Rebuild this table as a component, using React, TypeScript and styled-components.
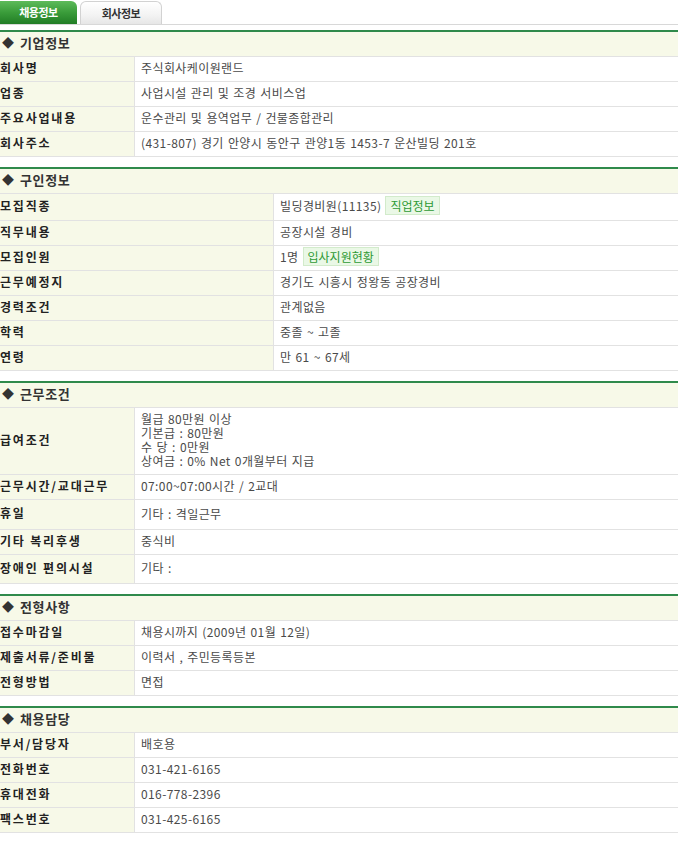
import React from "react";
import styled, { createGlobalStyle } from "styled-components";

const Global = createGlobalStyle`
  html, body { margin: 0; padding: 0; background: #fff; }
  body { font-family: "Noto Sans CJK KR", "Noto Sans", sans-serif; font-size: 12px; color: #444; }
  #root { width: 678px; }
`;

const Page = styled.div`
  width: 678px;
  display: flex;
  flex-direction: column;
`;

const TabBar = styled.div`
  display: flex;
  align-items: flex-end;
  gap: 3px;
  height: 24px;
  border-bottom: 1px solid #d8d8d8;
`;

const Tab = styled.div<{ $active?: boolean }>`
  width: ${(p) => (p.$active ? "77px" : "82px")};
  height: 23px;
  box-sizing: border-box;
  display: flex;
  align-items: center;
  justify-content: center;
  padding-bottom: 1px;
  font-size: 11px;
  font-weight: 700;
  letter-spacing: -0.5px;
  border-radius: ${(p) => (p.$active ? "0 6px 0 0" : "6px 6px 0 0")};
  color: ${(p) => (p.$active ? "#fff" : "#333")};
  background: ${(p) =>
    p.$active
      ? "linear-gradient(to bottom, #5dbb5a 0%, #3a9c3a 50%, #217d25 100%)"
      : "linear-gradient(to bottom, #ffffff 0%, #f3f3f3 60%, #e6e6e6 100%)"};
  border: ${(p) => (p.$active ? "none" : "1px solid #d2d2d2")};
  border-bottom: none;
`;

const Content = styled.div`
  padding-top: 5px;
  display: flex;
  flex-direction: column;
  gap: 10px;
`;

const Section = styled.section`
  border-top: 2px solid #2f8a4b;
  display: flex;
  flex-direction: column;
`;

const SectionHead = styled.div`
  height: 25px;
  box-sizing: border-box;
  padding: 0 0 3px 2px;
  background: #f7f9e8;
  border-bottom: 1px solid #e2e2e2;
  display: flex;
  align-items: center;
  gap: 6px;
  font-size: 13px;
  font-weight: 700;
  color: #333;
  letter-spacing: 0.6px;
`;

const Diamond = styled.span`
  font-size: 12px;
  color: #333;
  letter-spacing: 0;
`;

const Row = styled.div<{ $label: number; $h?: number }>`
  display: grid;
  grid-template-columns: ${(p) => p.$label}px 1fr;
  box-sizing: border-box;
  min-height: ${(p) => (p.$h ?? 24) + 1}px;
  border-bottom: 1px solid #e2e2e2;
`;

const Label = styled.div`
  background: #f7f9e8;
  border-right: 1px solid #e2e2e2;
  display: flex;
  align-items: center;
  padding-bottom: 4px;
  box-sizing: border-box;
  font-weight: 700;
  font-size: 12px;
  color: #222;
  letter-spacing: 1.8px;
  white-space: nowrap;
`;

const Value = styled.div`
  display: flex;
  align-items: center;
  padding: 0 0 3px 6px;
  box-sizing: border-box;
  color: #4a4a4a;
  font-size: 12px;
  letter-spacing: 0.4px;
  word-spacing: 1px;
  white-space: nowrap;
`;

const Lines = styled.div`
  display: flex;
  flex-direction: column;
  justify-content: center;
  padding: 0 0 3px 6px;
  line-height: 14px;
  color: #4a4a4a;
  font-size: 12px;
  letter-spacing: 0.4px;
  word-spacing: 1px;
  white-space: nowrap;
`;

const Badge = styled.span`
  display: inline-block;
  margin-left: 4px;
  padding: 0 4px;
  line-height: 17px;
  background: #eaf8e6;
  border: 1px solid #d2ebcb;
  color: #2e9a35;
  font-size: 12px;
  letter-spacing: 0;
`;

type Item = { k: string; v: React.ReactNode; h?: number; multi?: boolean };

const Block: React.FC<{ title: string; label: number; items: Item[] }> = ({ title, label, items }) => (
  <Section>
    <SectionHead>
      <Diamond>◆</Diamond>
      {title}
    </SectionHead>
    {items.map((it) => (
      <Row key={it.k} $label={label} $h={it.h}>
        <Label>{it.k}</Label>
        {it.multi ? <Lines>{it.v}</Lines> : <Value>{it.v}</Value>}
      </Row>
    ))}
  </Section>
);

export default function App() {
  return (
    <Page>
      <Global />
      <TabBar>
        <Tab $active>채용정보</Tab>
        <Tab>회사정보</Tab>
      </TabBar>
      <Content>
        <Block
          title="기업정보"
          label={135}
          items={[
            { k: "회사명", v: "주식회사케이원랜드" },
            { k: "업종", v: "사업시설 관리 및 조경 서비스업" },
            { k: "주요사업내용", v: "운수관리 및 용역업무 / 건물종합관리" },
            { k: "회사주소", v: "(431-807) 경기 안양시 동안구 관양1동 1453-7 운산빌딩 201호" },
          ]}
        />
        <Block
          title="구인정보"
          label={274}
          items={[
            {
              k: "모집직종",
              h: 26,
              v: (
                <>
                  빌딩경비원(11135)<Badge>직업정보</Badge>
                </>
              ),
            },
            { k: "직무내용", v: "공장시설 경비" },
            {
              k: "모집인원",
              v: (
                <>
                  1명<Badge>입사지원현황</Badge>
                </>
              ),
            },
            { k: "근무예정지", v: "경기도 시흥시 정왕동 공장경비" },
            { k: "경력조건", v: "관계없음" },
            { k: "학력", v: "중졸 ~ 고졸" },
            { k: "연령", v: "만 61 ~ 67세" },
          ]}
        />
        <Block
          title="근무조건"
          label={135}
          items={[
            {
              k: "급여조건",
              h: 66,
              multi: true,
              v: (
                <>
                  <span>월급 80만원 이상</span>
                  <span>기본급 : 80만원</span>
                  <span>수 당 : 0만원</span>
                  <span>상여금 : 0% Net 0개월부터 지급</span>
                </>
              ),
            },
            { k: "근무시간/교대근무", v: "07:00~07:00시간 / 2교대" },
            { k: "휴일", h: 29, v: "기타 : 격일근무" },
            { k: "기타 복리후생", v: "중식비" },
            { k: "장애인 편의시설", h: 28, v: "기타 :" },
          ]}
        />
        <Block
          title="전형사항"
          label={135}
          items={[
            { k: "접수마감일", v: "채용시까지 (2009년 01월 12일)" },
            { k: "제출서류/준비물", v: "이력서 , 주민등록등본" },
            { k: "전형방법", v: "면접" },
          ]}
        />
        <Block
          title="채용담당"
          label={135}
          items={[
            { k: "부서/담당자", v: "배호용" },
            { k: "전화번호", v: "031-421-6165" },
            { k: "휴대전화", v: "016-778-2396" },
            { k: "팩스번호", v: "031-425-6165" },
          ]}
        />
      </Content>
    </Page>
  );
}
